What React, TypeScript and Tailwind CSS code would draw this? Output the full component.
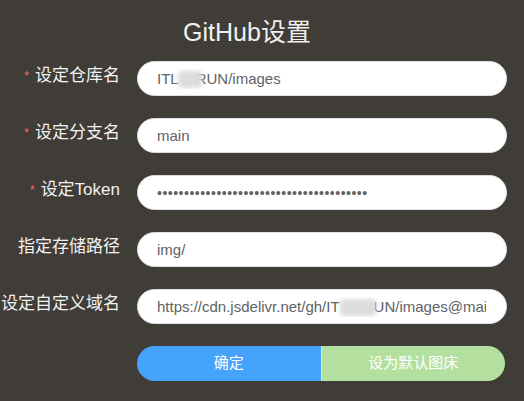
import React from 'react';

const font = { fontFamily: '"Liberation Sans", "Noto Sans CJK SC", sans-serif' };

function Blur({ w, className = '' }: { w: number; className?: string }) {
  return (
    <span
      className={`relative inline-block h-[17px] rounded-sm bg-[#dcdcdc] align-middle blur-[2px] ${className}`}
      style={{ width: w }}
    />
  );
}

function Row({
  label,
  required,
  children,
}: {
  label: string;
  required?: boolean;
  children: React.ReactNode;
}) {
  return (
    <div className="flex items-center">
      <div className="flex w-[120px] shrink-0 -translate-y-[3px] items-center justify-end whitespace-nowrap text-[17px] text-[#f2f2f2]">
        {required && <span className="mr-[6px] text-[12px] text-[#f56c6c]">*</span>}
        {label}
      </div>
      <div className="ml-[17px] flex h-[35px] w-[370px] items-center rounded-full border border-[#dcdfe6] bg-white pl-[19px] pr-[20px] text-[15px] text-[#606266]">
        <div className="min-w-0 flex-1 overflow-hidden whitespace-nowrap leading-[20px]">{children}</div>
      </div>
    </div>
  );
}

export default function App() {
  return (
    <div className="min-h-screen bg-[#403c37]" style={font}>
      <h1 className="w-[494px] pt-[16px] text-center text-[25px] leading-[32px] text-[#f0f0f0]">
        GitHub设置
      </h1>
      <div className="mt-[13px] flex flex-col gap-[22px]">
        <Row label="设定仓库名" required>
          <span>ITL</span>
          <Blur w={24} className="-ml-[1px] -mr-[6px]" />
          <span>RUN/images</span>
        </Row>
        <Row label="设定分支名" required>
          main
        </Row>
        <Row label="设定Token" required>
          <span className="text-[14px] tracking-[0.5px]">{'•'.repeat(39)}</span>
        </Row>
        <Row label="指定存储路径">img/</Row>
        <Row label="设定自定义域名">
          <span>https://cdn.jsdelivr.net/gh/IT</span>
          <Blur w={36} className="-mr-[2px]" />
          <span>UN/images@main/</span>
        </Row>
        <div className="ml-[137px] flex h-[35px] w-[368px] text-[15px] text-white">
          <button className="flex-1 rounded-l-full bg-[#45a3fc]">确定</button>
          <div className="w-px bg-[#d8ecd0]" />
          <button className="flex-1 rounded-r-full bg-[#b3e09f]">设为默认图床</button>
        </div>
      </div>
    </div>
  );
}
